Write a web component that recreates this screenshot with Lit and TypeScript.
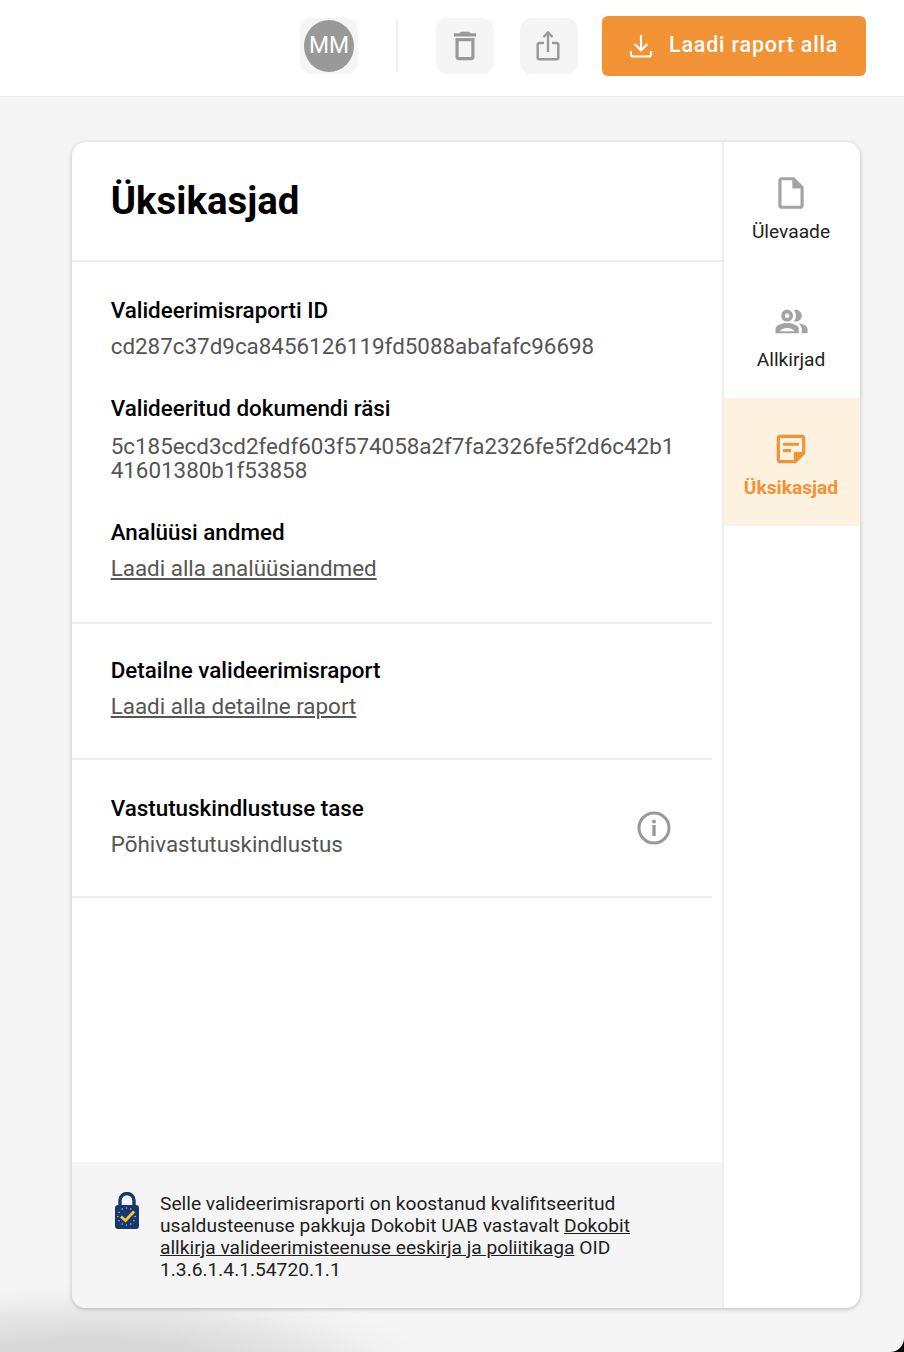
import { LitElement, html, css, svg } from 'lit';
import { customElement } from 'lit/decorators.js';

const euDots = [0, 1, 2, 3, 4, 5, 6, 7, 8, 9, 10, 11].map(i => {
    const a = (i / 12) * Math.PI * 2;
    return svg`<circle cx=${(12.5 + Math.cos(a) * 8.6).toFixed(2)} cy=${(24.5 + Math.sin(a) * 8.6).toFixed(2)} r="0.7" fill="#c9d3e6"></circle>`;
});

@customElement('app-root')
export class AppRoot extends LitElement {
    static styles = css`
        :host {
            display: block;
            background: #000;
            font-family: Roboto, "Liberation Sans", sans-serif;
        }

        .page {
            position: relative;
            height: 1352px;
            overflow: hidden;
            display: flex;
            flex-direction: column;
            background: #f5f5f5;
            border-bottom-right-radius: 14px;
        }

        .smudge {
            position: absolute;
            left: -260px;
            top: 1284px;
            width: 700px;
            height: 172px;
            background: radial-gradient(ellipse closest-side at center, #d6d6d6 0%, #dadada 40%, #e7e7e7 68%, #f1f1f1 86%, rgba(245, 245, 245, 0) 100%);
        }

        header {
            flex: none;
            height: 97px;
            box-sizing: border-box;
            display: flex;
            align-items: center;
            justify-content: flex-end;
            padding: 0 38px 4px 0;
            background: #fff;
            border-bottom: 1px solid #eee;
        }

        .tool {
            width: 58px;
            height: 56px;
            display: flex;
            align-items: center;
            justify-content: center;
            border-radius: 12px;
            background: #f5f5f5;
        }

        .tool svg {
            display: block;
        }

        .avatar {
            width: 50px;
            height: 52px;
            box-sizing: border-box;
            padding-bottom: 2px;
            display: flex;
            align-items: center;
            justify-content: center;
            border-radius: 50%;
            background: #999;
            color: #fff;
            font-size: 23px;
        }

        .divider {
            width: 2px;
            height: 52px;
            margin: 0 38px;
            background: #eee;
        }

        .share {
            box-sizing: border-box;
            margin: 0 24px 0 26px;
            padding-right: 2px;
        }

        .download {
            width: 264px;
            height: 60px;
            box-sizing: border-box;
            display: flex;
            align-items: center;
            padding: 0 0 3px 27px;
            gap: 16px;
            border-radius: 6px;
            background: #f19235;
            color: #fff;
            font-size: 21.5px;
            font-weight: 500;
            letter-spacing: 0.8px;
        }

        .download svg {
            margin-top: 3px;
        }

        .card {
            position: relative;
            flex: 1;
            display: flex;
            margin: 45px 44px 44px 72px;
            border-radius: 14px;
            overflow: hidden;
            background: #fff;
            box-shadow: 0 1px 4px rgba(0, 0, 0, 0.25);
        }

        main {
            flex: 1;
            display: flex;
            flex-direction: column;
            border-right: 2px solid #eee;
        }

        .title {
            height: 120px;
            box-sizing: border-box;
            display: flex;
            align-items: center;
            padding: 0 0 2px 38.7px;
            border-bottom: 2px solid #eee;
        }

        h1 {
            margin: 0;
            font-size: 38.4px;
            font-weight: 700;
            color: #000;
        }

        .section {
            position: relative;
            margin-right: 10px;
            padding: 35px 0 0 38.7px;
            border-bottom: 2px solid #eee;
            box-sizing: border-box;
        }

        .s1 { height: 362px; }
        .s2 { height: 136px; padding-top: 33px; }
        .s3 { height: 138px; }

        .label {
            font-size: 22.4px;
            font-weight: 500;
            line-height: 26px;
            color: #000;
        }

        .value {
            margin: 11px 0 0;
            font-size: 22.4px;
            line-height: 24px;
            color: #555;
        }

        .value a {
            color: #555;
            text-decoration: underline;
        }

        .field + .field {
            margin-top: 37px;
        }

        .hash {
            margin-top: 13px;
        }

        .info {
            position: absolute;
            right: 41px;
            top: 51px;
            display: block;
        }

        .spacer {
            flex: 1;
        }

        footer {
            height: 146px;
            box-sizing: border-box;
            display: flex;
            padding: 31px 88px 0 42px;
            gap: 20px;
            background: #f5f5f5;
            font-size: 19.2px;
            line-height: 22px;
            color: #222;
        }

        footer svg {
            flex: none;
            display: block;
            margin-top: -1px;
        }

        footer a {
            color: #222;
            text-decoration: underline;
        }

        nav {
            flex: none;
            width: 136px;
        }

        .item {
            height: 128px;
            box-sizing: border-box;
            display: flex;
            flex-direction: column;
            align-items: center;
            padding: 32px 2px 0 0;
            font-size: 19.2px;
            color: #222;
        }

        .item svg {
            display: block;
            width: 38px;
            height: 38px;
        }

        .item svg.people {
            width: 35px;
            height: 35px;
            margin: 2px 0 1px;
        }

        .item span {
            margin-top: 8px;
            line-height: 24px;
        }

        .item.active {
            background: #fdf1e0;
            color: #f19235;
            font-weight: 700;
        }
    `;

    render() {
        return html`
            <div class="page">
                <div class="smudge"></div>
                <header>
                    <div class="tool"><div class="avatar">MM</div></div>
                    <div class="divider"></div>
                    <div class="tool">
                        <svg width="38" height="38" viewBox="0 0 24 24" fill="#999"><path d="M6 19c0 1.100.9 2 2 2h8c1.100 0 2-.9 2-2V7H6v12zM8 9h8v10H8V9zm7.500-5l-1-1h-5l-1 1H5v2h14V4h-3.500z"></path></svg>
                    </div>
                    <div class="tool share">
                        <svg width="24" height="32" viewBox="0 0 24 32" fill="none" stroke="#999" stroke-width="2.4"><path d="M8 13H3.200a1.500 1.500 0 0 0-1.500 1.500v13.300a1.500 1.500 0 0 0 1.500 1.500h17.600a1.500 1.500 0 0 0 1.500-1.500V14.500a1.500 1.500 0 0 0-1.500-1.500H16"></path><path d="M12 22V3"></path><path d="M7.500 7 12 2.500 16.500 7"></path></svg>
                    </div>
                    <div class="download">
                        <svg width="24" height="24" viewBox="0 0 24 24" fill="none" stroke="#fff" stroke-width="2.2"><path d="M12 1v15"></path><path d="M5.500 10 12 16.200 18.500 10"></path><path d="M2 17v3.500a2 2 0 0 0 2 2h16a2 2 0 0 0 2-2V17"></path></svg>
                        <span>Laadi raport alla</span>
                    </div>
                </header>
                <div class="card">
                    <main>
                        <div class="title"><h1>Üksikasjad</h1></div>
                        <div class="section s1">
                            <div class="field">
                                <div class="label">Valideerimisraporti ID</div>
                                <p class="value">cd287c37d9ca8456126119fd5088abafafc96698</p>
                            </div>
                            <div class="field">
                                <div class="label">Valideeritud dokumendi räsi</div>
                                <p class="value hash">5c185ecd3cd2fedf603f574058a2f7fa2326fe5f2d6c42b1<br>41601380b1f53858</p>
                            </div>
                            <div class="field">
                                <div class="label">Analüüsi andmed</div>
                                <p class="value"><a>Laadi alla analüüsiandmed</a></p>
                            </div>
                        </div>
                        <div class="section s2">
                            <div class="label">Detailne valideerimisraport</div>
                            <p class="value"><a>Laadi alla detailne raport</a></p>
                        </div>
                        <div class="section s3">
                            <div class="label">Vastutuskindlustuse tase</div>
                            <p class="value">Põhivastutuskindlustus</p>
                            <svg class="info" width="34" height="34" viewBox="0 0 34 34" fill="none"><circle cx="17" cy="17" r="15" stroke="#999" stroke-width="3"></circle><circle cx="17" cy="10.500" r="2" fill="#999"></circle><rect x="15.300" y="14" width="3.400" height="11" fill="#999"></rect></svg>
                        </div>
                        <div class="spacer"></div>
                        <footer>
                            <svg width="26" height="38" viewBox="0 0 26 38">
                                <path d="M6 15V8.500a7 7 0 0 1 14 0V15" fill="none" stroke="#17386f" stroke-width="3.400"></path>
                                <rect x="1" y="13" width="24" height="24" rx="3" fill="#17386f"></rect>
                                ${euDots}
                                <path d="M7 24.500l4.500 4L20 19.500" fill="none" stroke="#f6c92e" stroke-width="2.800"></path>
                            </svg>
                            <div>Selle valideerimisraporti on koostanud kvalifitseeritud usaldusteenuse pakkuja Dokobit UAB vastavalt <a>Dokobit allkirja valideerimisteenuse eeskirja ja poliitikaga</a> OID 1.3.6.1.4.1.54720.1.1</div>
                        </footer>
                    </main>
                    <nav>
                        <div class="item">
                            <svg viewBox="0 0 24 24"><path fill="#a3a3a3" d="M14 2H6c-1.100 0-1.990.9-1.990 2L4 20c0 1.100.89 2 1.990 2H18c1.100 0 2-.9 2-2V8l-6-6zM6 20V4h7v5h5v11H6z"></path><path fill="#a3a3a3" d="M13 3h1l5 5v1h-6z"></path></svg>
                            <span>Ülevaade</span>
                        </div>
                        <div class="item">
                            <svg class="people" viewBox="0 0 24 24" fill="#a3a3a3" fill-rule="evenodd"><path d="M16.670 13.130C18.040 14.060 19 15.320 19 17v3h4v-3c0-2.180-3.570-3.470-6.330-3.870z"></path><path d="M15 12c2.210 0 4-1.790 4-4s-1.790-4-4-4c-.47 0-.91.1-1.330.24C14.500 5.270 15 6.580 15 8s-.5 2.730-1.330 3.760c.42.14.86.24 1.330.24z"></path><path d="M9 12c2.210 0 4-1.790 4-4s-1.790-4-4-4-4 1.790-4 4 1.790 4 4 4zm0-5.600c.88 0 1.600.72 1.600 1.600S9.880 9.600 9 9.600 7.400 8.880 7.400 8 8.120 6.400 9 6.400z"></path><path d="M9 13c-2.670 0-8 1.340-8 4v3h16v-3c0-2.660-5.330-4-8-4zM4 18.700c1-1.600 3-2.300 5-2.300s4 .7 5 2.300z"></path></svg>
                            <span>Allkirjad</span>
                        </div>
                        <div class="item active">
                            <svg viewBox="0 0 24 24" fill="#f19235"><path d="M19 5v9h-5v5H5V5h14m0-2H5C3.900 3 3 3.900 3 5v14c0 1.100.9 2 2 2h10l6-6V5c0-1.100-.9-2-2-2z"></path><path d="M12 14H7v-2h5v2zM17 10H7V8h10V10z"></path><path d="M14 14h6l-6 6z"></path></svg>
                            <span>Üksikasjad</span>
                        </div>
                    </nav>
                </div>
            </div>
        `;
    }
}
